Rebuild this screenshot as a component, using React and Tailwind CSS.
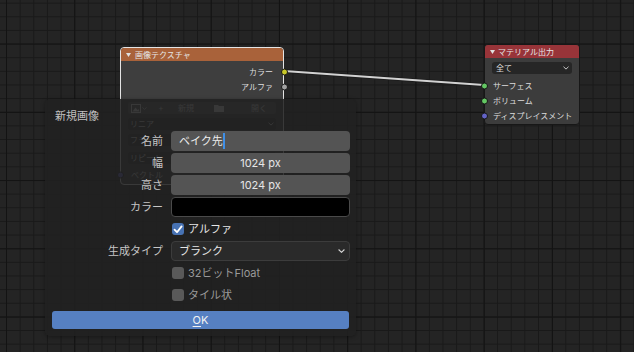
import React from "react";

function Tri({ className = "" }) {
  return (
    <svg width="5" height="4" viewBox="0 0 5 4" className={className}>
      <polygon points="0,0 5,0 2.5,4" fill="#e0e0e0" />
    </svg>
  );
}

function Chevron({ color = "#d0d0d0", w = 7, h = 4 }) {
  return (
    <svg width={w} height={h} viewBox="0 0 7 4">
      <polyline points="0.6,0.5 3.5,3.3 6.4,0.5" fill="none" stroke={color} strokeWidth="1.1" />
    </svg>
  );
}

function Socket({ color, side }) {
  return (
    <span
      className={
        "absolute top-1/2 -translate-y-1/2 w-[7px] h-[7px] rounded-full border border-[#151515] " +
        (side === "right" ? "right-[-4.5px]" : "left-[-4.5px]")
      }
      style={{ backgroundColor: color }}
    />
  );
}

function ImageTextureNode() {
  return (
    <div className="absolute left-[120px] top-[47px] w-[164px] h-[138px] rounded-[4px] border border-[#e4e4e4] bg-[#3e3e3e] text-[8px] leading-[10px] text-[#dedede]">
      <div className="h-[13px] rounded-t-[3px] bg-[#a9623a] flex items-center pl-[5px] gap-[4px] text-[#e6e6e6]">
        <Tri />
        <span>画像テクスチャ</span>
      </div>
      <div className="pt-[3px]">
        <div className="relative h-[15px] flex items-center justify-end pr-[10px]">
          カラー
          <Socket color="#c7c729" side="right" />
        </div>
        <div className="relative h-[15px] flex items-center justify-end pr-[10px]">
          アルファ
          <Socket color="#a1a1a1" side="right" />
        </div>
      </div>
      <div className="mt-[8px] mx-[7px] h-[12px] rounded-[3px] bg-[#545454] flex items-center text-[#d8d8d8]">
        <div className="flex items-center pl-[3px] gap-[1px] w-[26px]">
          <svg width="10" height="9" viewBox="0 0 10 9">
            <rect x="0.5" y="0.5" width="9" height="8" fill="none" stroke="#d8d8d8" strokeWidth="1" />
            <polygon points="1.5,7.5 4.5,3.5 6.5,6 7.5,5 8.5,7.5" fill="#d8d8d8" />
          </svg>
          <Chevron w={5} h={3} />
        </div>
        <span className="w-[14px] text-center">+</span>
        <span className="ml-[10px] w-[30px]">新規</span>
        <svg width="10" height="8" viewBox="0 0 10 8" className="ml-[6px]">
          <path d="M0,1 h4 l1,1 h5 v6 h-10z" fill="#d8d8d8" />
        </svg>
        <span className="ml-[27px]">開く</span>
      </div>
      <div className="mt-[4px] mx-[7px] h-[12px] rounded-[3px] bg-[#282828] flex items-center justify-between px-[2px] text-[#d8d8d8]">
        <span>リニア</span>
        <Chevron w={6} h={4} />
      </div>
      <div className="mt-[4px] mx-[7px] h-[12px] rounded-[3px] bg-[#282828] flex items-center justify-between px-[2px] text-[#d8d8d8]">
        <span>フラット</span>
        <Chevron w={6} h={4} />
      </div>
      <div className="mt-[6px] mx-[7px] h-[12px] rounded-[3px] bg-[#282828] flex items-center justify-between px-[2px] text-[#d8d8d8]">
        <span>リピート</span>
        <Chevron w={6} h={4} />
      </div>
      <div className="relative mt-[5px] h-[12px] flex items-center pl-[10px] text-[#d8d8d8]">
        ベクトル
        <Socket color="#6363c7" side="left" />
      </div>
    </div>
  );
}

function MaterialOutputNode() {
  return (
    <div className="absolute left-[484px] top-[44px] w-[96px] h-[81px] rounded-[4px] border border-[#171717] bg-[#3c3c3c] text-[8px] leading-[10px] text-[#dcdcdc]">
      <div className="h-[13px] rounded-t-[3px] bg-[#983439] flex items-center pl-[5px] gap-[3px] text-[#e6e6e6]">
        <Tri />
        <span>マテリアル出力</span>
      </div>
      <div className="mt-[4px] mx-[7px] h-[12px] rounded-[3px] bg-[#262626] flex items-center justify-between pl-[4px] pr-[3px] text-[#dcdcdc]">
        <span>全て</span>
        <Chevron w={6} h={4} />
      </div>
      <div className="mt-[4px]">
        <div className="relative h-[15px] flex items-center pl-[8px]">
          サーフェス
          <Socket color="#63c763" side="left" />
        </div>
        <div className="relative h-[15px] flex items-center pl-[8px]">
          ボリューム
          <Socket color="#63c763" side="left" />
        </div>
        <div className="relative h-[15px] flex items-center pl-[8px]">
          ディスプレイスメント
          <Socket color="#6363c7" side="left" />
        </div>
      </div>
    </div>
  );
}

function Row({ label, children }) {
  return (
    <div className="grid grid-cols-[111px_179px] gap-x-[8px] items-center h-[20px]">
      <div className="text-right text-[#c6c6c6]">{label}</div>
      <div className="h-[20px] flex items-center">{children}</div>
    </div>
  );
}

function Check({ checked, label, dim }) {
  return (
    <div className="flex items-center gap-[4px] pl-[1px]">
      <span
        className={
          "w-[12px] h-[12px] rounded-[3px] flex items-center justify-center " +
          (checked ? "bg-[#4772b3]" : "bg-[#595959]")
        }
      >
        {checked && (
          <svg width="10" height="9" viewBox="0 0 10 9">
            <polyline points="1.5,4.6 4,7.2 8.6,1.4" fill="none" stroke="#ffffff" strokeWidth="1.8" strokeLinecap="round" strokeLinejoin="round" />
          </svg>
        )}
      </span>
      <span className={dim ? "text-[#9a9a9a]" : "text-[#e6e6e6]"}>{label}</span>
    </div>
  );
}

function Dialog() {
  return (
    <div className="absolute left-[45px] top-[99px] w-[311px] h-[237px] rounded-[5px] bg-[rgba(33,33,33,0.88)] shadow-[0_1px_4px_rgba(0,0,0,0.35)] px-[7px] pt-[9px] pb-[7px] flex flex-col text-[11px] leading-[14px]">
      <div className="h-[15px] flex items-center pl-[3px] text-[#c0c0c0]">新規画像</div>
      <div className="mt-[8px] flex flex-col gap-[2px]">
        <Row label="名前">
          <div className="w-full h-full rounded-[4px] bg-[#545454] flex items-center pl-[8px] text-[#ececec]">
            <span>ベイク先</span>
            <span className="w-[2px] h-[16px] bg-[#3f8fe6]" />
          </div>
        </Row>
        <Row label="幅">
          <div className="w-full h-full rounded-[4px] bg-[#545454] flex items-center justify-center text-[#e6e6e6]">
            1024 px
          </div>
        </Row>
        <Row label="高さ">
          <div className="w-full h-full rounded-[4px] bg-[#545454] flex items-center justify-center text-[#e6e6e6]">
            1024 px
          </div>
        </Row>
        <Row label="カラー">
          <div className="w-full h-full rounded-[4px] bg-[#000000] border border-[#4a4a4a]" />
        </Row>
        <Row label="">
          <Check checked label="アルファ" />
        </Row>
        <Row label="生成タイプ">
          <div className="w-full h-full rounded-[4px] bg-[#2a2a2a] border border-[#3c3c3c] flex items-center justify-between pl-[7px] pr-[4px] text-[#e6e6e6]">
            <span>ブランク</span>
            <Chevron color="#d6d6d6" w={7} h={4} />
          </div>
        </Row>
        <Row label="">
          <Check label="32ビットFloat" dim />
        </Row>
        <Row label="">
          <Check label="タイル状" dim />
        </Row>
      </div>
      <button className="mt-[6px] h-[18px] w-full rounded-[3px] bg-[#5680c2] flex items-center justify-center text-[#f2f2f2]">
        <span className="underline underline-offset-[2px] decoration-[1px]">O</span>K
      </button>
    </div>
  );
}

export default function App() {
  return (
    <div className="relative w-[634px] h-[352px] overflow-hidden bg-[#242424] bg-[image:linear-gradient(to_right,#131313_1px,transparent_1px),linear-gradient(to_bottom,#131313_1px,transparent_1px),linear-gradient(to_right,#191919_1px,transparent_1px),linear-gradient(to_bottom,#191919_1px,transparent_1px)] bg-[size:68.25px_68.25px,68.25px_68.25px,13.65px_13.65px,13.65px_13.65px] bg-[position:6px_43.6px,6px_43.6px,6px_2.65px,6px_2.65px] font-['Inter','Noto_Sans_CJK_JP',sans-serif]">
      <svg className="absolute inset-0" width="634" height="352">
        <line x1="284" y1="71" x2="484" y2="85" stroke="#1a1a1a" strokeWidth="3.6" />
        <line x1="284" y1="71" x2="484" y2="85" stroke="#d2d2d2" strokeWidth="1.8" />
      </svg>
      <ImageTextureNode />
      <MaterialOutputNode />
      <Dialog />
    </div>
  );
}
